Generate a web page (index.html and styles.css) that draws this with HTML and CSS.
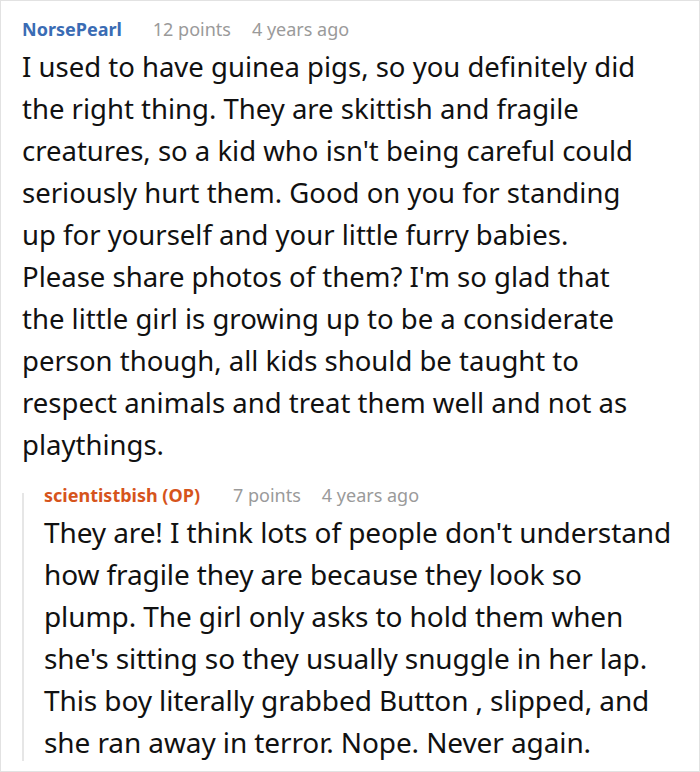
FILE: index.html
```html
<!DOCTYPE html>
<html>
<head>
<meta charset="utf-8">
<link rel="stylesheet" href="styles.css">
</head>
<body>
<div class="box">
  <div class="comment">
    <div class="meta">
      <span class="author">NorsePearl</span>
      <span class="info">12 points</span>
      <span class="info">4 years ago</span>
    </div>
    <p class="text main-text">I used to have guinea pigs, so you definitely did the right thing. They are skittish and fragile creatures, so a kid who isn't being careful could seriously hurt them. Good on you for standing up for yourself and your little furry babies. Please share photos of them? I'm so glad that the little girl is growing up to be a considerate person though, all kids should be taught to respect animals and treat them well and not as playthings.</p>
    <div class="reply">
      <div class="meta">
        <span class="author op">scientistbish (OP)</span>
        <span class="info">7 points</span>
        <span class="info">4 years ago</span>
      </div>
      <p class="text reply-text">They are! I think lots of people don't understand how fragile they are because they look so plump. The girl only asks to hold them when she's sitting so they usually snuggle in her lap. This boy literally grabbed Button , slipped, and she ran away in terror. Nope. Never again.</p>
    </div>
  </div>
</div>
</body>
</html>
```
FILE: styles.css
```css
html, body {
  margin: 0;
  padding: 0;
  background: #fff;
}
.box {
  width: 700px;
  height: 772px;
  box-sizing: border-box;
  border: 1px solid #e2e2e2;
  overflow: hidden;
  font-family: "Noto Sans", "Open Sans", sans-serif;
  color: #111;
}
.comment {
  height: 760px;
  box-sizing: border-box;
  overflow: hidden;
  padding: 15px 26px 0 21px;
}
.meta {
  display: flex;
  gap: 21px;
  font-size: 18px;
  line-height: 26px;
  margin-bottom: 4px;
}
.author {
  font-weight: 700;
  color: #3a6cb4;
  margin-right: 10px;
}
.author.op {
  color: #d6541c;
  margin-right: 12px;
}
.info {
  color: #9a9a9a;
}
.text {
  margin: 0;
  font-size: 27.5px;
  line-height: 42px;
}
.main-text {
  margin-right: 27px;
}
.reply {
  margin-top: 16px;
  padding-left: 22px;
  background: linear-gradient(#e6e6e6, #e6e6e6) no-repeat 0 11px / 2px 100%;
}
.reply .meta {
  margin-bottom: 3px;
}
.reply-text {
  font-size: 28px;
  line-height: 42px;
  letter-spacing: -0.1px;
}
```
